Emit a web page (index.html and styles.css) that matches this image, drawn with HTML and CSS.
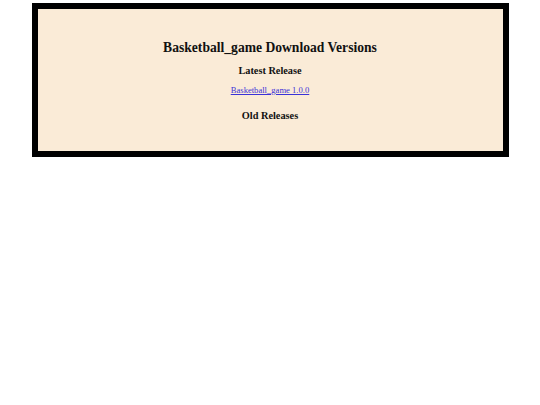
FILE: index.html
```html
<!DOCTYPE html>
<html lang="en">
<head>
  <meta charset="UTF-8">
  <meta name="viewport" content="width=device-width, initial-scale=1.0">
  <title>Basketball_game Download Versions</title>
  <link rel="stylesheet" href="styles.css">
</head>
<body>
  <div class="container">
    <h1>Basketball_game Download Versions</h1>

    <h3>Latest Release</h3>
    <a href="#">Basketball_game 1.0.0</a>

    <h3 class="old">Old Releases</h3>
  </div>
</body>
</html>
```

FILE: styles.css
```css
body, html {
  margin: 0;
  padding: 0;
  font-family: "Liberation Serif", "Times New Roman", serif;
  background-color: #ffffff;
}

.container {
  box-sizing: border-box;
  width: 477px;
  height: 154px;
  margin: 3px auto 0;
  padding-top: 31px;
  border: 6px solid #000000;
  background-color: #faebd7;
  text-align: center;
  color: #111111;
  font-size: 8.6px;
  line-height: 10px;
}

.container h1 {
  font-size: 13.6px;
  line-height: 16px;
  margin: 0 0 9px;
}

.container h3 {
  font-size: 10.3px;
  line-height: 12px;
  margin: 0 0 8px;
}

.container a {
  color: #3a32d8;
}

.container .old {
  margin-top: 15px;
}
```
